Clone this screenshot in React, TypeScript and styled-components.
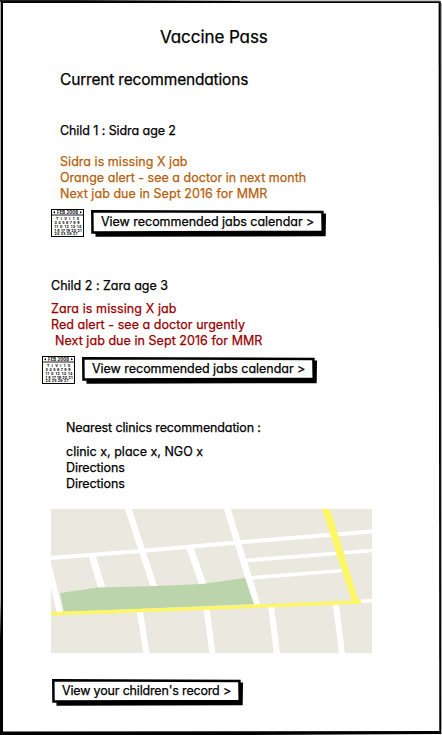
import React from "react";
import styled, { createGlobalStyle } from "styled-components";

const GlobalStyle = createGlobalStyle`
  * { box-sizing: border-box; }
  html, body { margin: 0; background: #fff; }
  body {
    font-family: Inter, "Noto Sans", sans-serif;
    font-feature-settings: "cv11" 1, "calt" 0;
    -webkit-text-stroke: 0.25px currentColor;
    color: #000;
    overflow: hidden;
  }
`;

const Screen = styled.main`
  position: relative;
  isolation: isolate;
  width: 442px;
  height: 735px;
  display: flex;
  flex-direction: column;
  align-items: flex-start;
`;

const FrameArt = styled.svg`
  position: absolute;
  inset: 0;
  z-index: -1;
  pointer-events: none;
`;

const Title = styled.h1`
  margin: 26px 0 0 160px;
  font-size: 17px;
  font-weight: 400;
  line-height: 22px;
  letter-spacing: -0.08px;
  white-space: nowrap;
`;

const Heading = styled.h2`
  margin: 22px 0 0 60px;
  font-size: 15.5px;
  font-weight: 400;
  line-height: 20px;
  letter-spacing: -0.18px;
  white-space: nowrap;
`;

const Section = styled.section<{ $top: number; $left: number }>`
  display: flex;
  flex-direction: column;
  margin: ${(p) => p.$top}px 0 0 ${(p) => p.$left}px;
`;

const Lines = styled.div<{ $top: number; $color?: string }>`
  display: flex;
  flex-direction: column;
  margin-top: ${(p) => p.$top}px;
  color: ${(p) => p.$color ?? "#000"};
`;

const Line = styled.div<{ $spacing?: number; $indent?: number }>`
  height: 16px;
  padding-left: ${(p) => p.$indent ?? 0}px;
  font-size: 12.5px;
  line-height: 16px;
  letter-spacing: ${(p) => p.$spacing ?? 0}px;
  white-space: nowrap;
`;

const ActionRow = styled.div`
  display: flex;
  align-items: flex-end;
  gap: 7px;
  margin: 7px 0 0 -9px;
`;

const ButtonBox = styled.button<{ $width: number; $spacing?: number }>`
  position: relative;
  isolation: isolate;
  display: block;
  width: ${(p) => p.$width}px;
  height: 27px;
  margin: 0;
  padding: 4px 0 7px 10px;
  border: 0;
  background: transparent;
  color: #000;
  font: inherit;
  font-feature-settings: inherit;
  font-size: 12.5px;
  line-height: 16px;
  letter-spacing: ${(p) => p.$spacing ?? 0}px;
  text-align: left;
  white-space: nowrap;
`;

const ButtonArt = styled.svg`
  position: absolute;
  inset: 0;
  z-index: -1;
`;

const MapArt = styled.svg`
  display: block;
  flex: none;
  margin: 17px 0 0 51px;
`;

const Footer = styled.footer`
  margin: 26px 0 0 52px;
`;

interface SketchButtonProps {
  width: number;
  spacing?: number;
  children: React.ReactNode;
}

function SketchButton({ width: w, spacing, children }: SketchButtonProps) {
  return (
    <ButtonBox $width={w} $spacing={spacing}>
      <ButtonArt width={w} height={27} viewBox={`0 0 ${w} 27`}>
        <path d={`M4 4 L${w} 3.4 L${w - 0.3} 26.2 L4.5 26.8 Z`} fill="#000" />
        <path d={`M1.3 1.3 L${w - 3.6} 2 L${w - 3.3} 22 L1.5 22.4 Z`} fill="#fff" stroke="#000" strokeWidth="2.5" />
      </ButtonArt>
      {children}
    </ButtonBox>
  );
}

const weeks = [
  { text: "T I V I 1 S", x: 5, width: 23 },
  { text: "3 4 5 6 7 8 9", x: 3.5, width: 25 },
  { text: "11 0 12 13 14", x: 3.5, width: 27 },
  { text: "1 8 17 19 20 21", x: 3.5, width: 27 },
  { text: "24 25 26 27", x: 3.5, width: 23 },
];

function Calendar() {
  return (
    <svg width="33" height="28" viewBox="0 0 33 28" fontFamily="Inter, sans-serif" fontWeight="700">
      <rect x="0.5" y="0.5" width="32" height="27" fill="#fff" stroke="#000" />
      <path d="M1 6h31" stroke="#000" strokeWidth="0.9" />
      <path d="M4 2 2 3.3 4 4.6zM29 2l2 1.3-2 1.3z" />
      <text x="6" y="5" fontSize="4.2" textLength="21">
        FEB 2008
      </text>
      {weeks.map((week, i) => (
        <text key={week.text} x={week.x} y={10.8 + i * 3.9} fontSize="3.6" textLength={week.width}>
          {week.text}
        </text>
      ))}
    </svg>
  );
}

function StreetMap() {
  return (
    <MapArt width="321" height="144" viewBox="0 0 321 144">
      <rect width="321" height="144" fill="#ebe8e0" />
      <g fill="none" stroke="#fff">
        <path d="M0 49 L90 42 L192 33 L321 22.5" strokeWidth="4" />
        <path d="M195 51.5 L321 41.5M199 69 L292 61.5M308 92.5 L321 91.5" strokeWidth="3.6" />
        <path d="M77 -1 L103 78M176 -1 L206 96" strokeWidth="6.5" />
        <path d="M41 46 L51 80M139 39 L152 76" strokeWidth="7" />
        <path d="M-2 58 L9 104" strokeWidth="6" />
        <path d="M88.5 100 L95.5 145M155.5 99 L161.5 145M220 97 L226 145M285 95 L291 145" strokeWidth="6" />
      </g>
      <path d="M9 84 47 78.5 105 77 151 75 194 69 203 95 13 103z" fill="#bcd4ab" />
      <path d="M0 104.8 L160 99 L310 93" fill="none" stroke="#fdf768" strokeWidth="3.4" />
      <path d="M271 0h8l29 93h-7z" fill="#fdf768" />
    </MapArt>
  );
}

export default function App() {
  return (
    <Screen>
      <GlobalStyle />
      <FrameArt width="442" height="735" viewBox="0 0 442 735">
        <path d="M0 0H440V1L120 0.8L0 2z" fill="#c5c9c5" />
        <path d="M0 0H80L240 1V2H0z" fill="#222" />
        <path d="M0.5 2V733M441.5 3V734" stroke="#aaa" />
        <path d="M1 1.2 L440.8 1.2 L441 734 L240 735 L0 735 V640 L1 600 Z" fill="#000" />
        <path d="M3 3 L438.6 3 L439.3 731 L3 731.4 Z" fill="#fff" />
      </FrameArt>
      <Title>Vaccine Pass</Title>
      <Heading>Current recommendations</Heading>
      <Section $top={33} $left={60}>
        <Line $spacing={-0.08}>Child 1 : Sidra age 2</Line>
        <Lines $top={15} $color="#b65f0c">
          <Line $spacing={0.04}>Sidra is missing X jab</Line>
          <Line $spacing={0.02}>Orange alert - see a doctor in next month</Line>
          <Line $spacing={0.05}>Next jab due in Sept 2016 for MMR</Line>
        </Lines>
        <ActionRow>
          <Calendar />
          <SketchButton width={235} spacing={-0.03}>
            View recommended jabs calendar &gt;
          </SketchButton>
        </ActionRow>
      </Section>
      <Section $top={41} $left={51}>
        <Line>Child 2 : Zara age 3</Line>
        <Lines $top={7} $color="#990000">
          <Line $spacing={0.1}>Zara is missing X jab</Line>
          <Line $spacing={0.05}>Red alert - see a doctor urgently</Line>
          <Line $indent={4} $spacing={0.05}>
            Next jab due in Sept 2016 for MMR
          </Line>
        </Lines>
        <ActionRow>
          <Calendar />
          <SketchButton width={235} spacing={-0.03}>
            View recommended jabs calendar &gt;
          </SketchButton>
        </ActionRow>
      </Section>
      <Section $top={36} $left={66}>
        <Line $spacing={-0.12}>Nearest clinics recommendation :</Line>
        <Lines $top={8}>
          <Line>clinic x, place x, NGO x</Line>
          <Line $spacing={-0.08}>Directions</Line>
          <Line $spacing={-0.08}>Directions</Line>
        </Lines>
      </Section>
      <StreetMap />
      <Footer>
        <SketchButton width={191} spacing={-0.17}>
          View your children's record &gt;
        </SketchButton>
      </Footer>
    </Screen>
  );
}
